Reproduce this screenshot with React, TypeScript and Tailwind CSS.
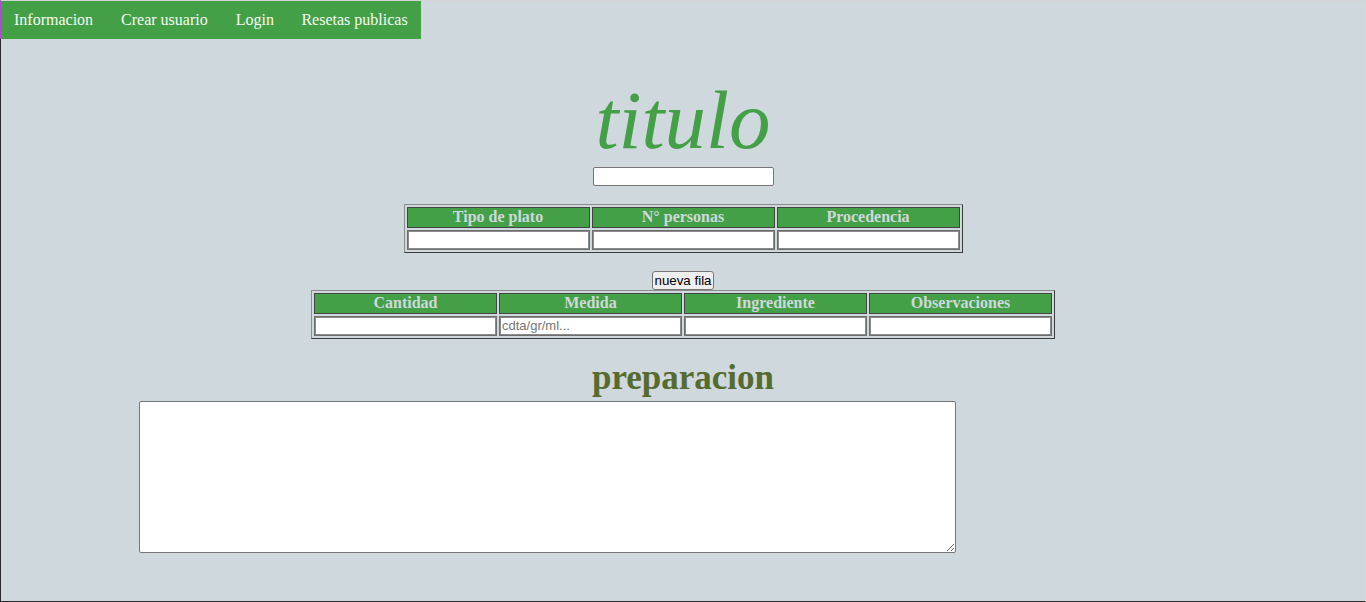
import React from "react";

const serif = "font-['Liberation_Serif','Times_New_Roman',serif]";
const sans = "font-['Liberation_Sans',Arial,sans-serif]";

function HeaderCell({ label }: { label: string }) {
    return (
        <th
            className={`w-[183px] h-[21px] p-0 pb-[2px] bg-[#43a047] border border-[#444] text-[#cfd8dc] text-[16px] leading-[17px] font-bold text-center ${serif}`}
        >
            {label}
        </th>
    );
}

function InputCell({ placeholder }: { placeholder?: string }) {
    return (
        <td className="w-[183px] h-[20px] p-0 border border-[#6e6e6e]">
            <input
                type="text"
                placeholder={placeholder}
                className={`block w-full h-[18px] bg-white border border-[#8a8a8a] px-[1px] text-[13px] text-black placeholder:text-[#757575] outline-none ${sans}`}
            />
        </td>
    );
}

export default function App() {
    const info = ["Tipo de plato", "N° personas", "Procedencia"];
    const ingredients = ["Cantidad", "Medida", "Ingrediente", "Observaciones"];

    return (
        <div
            className={`min-h-[602px] bg-[#cfd8dc] border-t border-r border-t-[#d4d4d4] border-r-[#d8d8d8] border-l border-b border-l-[#2b2b2b] border-b-[#2b2b2b] flex flex-col ${serif}`}
        >
            <nav className="-ml-px w-fit flex bg-[#43a047] shadow-[inset_1px_0_0_#b04ad0]">
                {["Informacion", "Crear usuario", "Login", "Resetas publicas"].map(
                    (item) => (
                        <a
                            key={item}
                            className="px-[14px] last:pl-[13.5px] last:pr-[13px] py-[10px] text-[16px] leading-[18px] text-[#f4fbf4] cursor-pointer"
                        >
                            {item}
                        </a>
                    )
                )}
            </nav>

            <div className="flex flex-col items-center">
                <h1 className="mt-[35px] text-[83px] leading-[93px] italic font-normal text-[#43a047]">
                    titulo
                </h1>
                <input
                    type="text"
                    className="w-[181px] h-[19px] bg-white border border-[#767676] rounded-[2px] outline-none"
                />

                <table className="mt-[18px] border-separate border-spacing-[2px] border border-t-[#8c8c8c] border-l-[#8c8c8c] border-b-[#3c3c3c] border-r-[#3c3c3c]">
                    <thead>
                        <tr>
                            {info.map((h) => (
                                <HeaderCell key={h} label={h} />
                            ))}
                        </tr>
                    </thead>
                    <tbody>
                        <tr>
                            {info.map((h) => (
                                <InputCell key={h} />
                            ))}
                        </tr>
                    </tbody>
                </table>

                <button
                    className={`mt-[18px] h-[19px] px-[1px] bg-[#efefef] border border-[#767676] rounded-[3px] text-[13.33px] leading-[15px] text-black ${sans}`}
                >
                    nueva fila
                </button>

                <table className="border-separate border-spacing-[2px] border border-t-[#8c8c8c] border-l-[#8c8c8c] border-b-[#3c3c3c] border-r-[#3c3c3c]">
                    <thead>
                        <tr>
                            {ingredients.map((h) => (
                                <HeaderCell key={h} label={h} />
                            ))}
                        </tr>
                    </thead>
                    <tbody>
                        <tr>
                            {ingredients.map((h) => (
                                <InputCell
                                    key={h}
                                    placeholder={h === "Medida" ? "cdta/gr/ml..." : undefined}
                                />
                            ))}
                        </tr>
                    </tbody>
                </table>

                <h2 className="mt-[19px] text-[35px] leading-[40px] font-bold text-[#556b2f]">
                    preparacion
                </h2>
            </div>

            <textarea className="mt-[3px] ml-[138px] w-[817px] h-[152px] bg-white border border-[#767676] rounded-[2px] p-[2px] outline-none" />
        </div>
    );
}
